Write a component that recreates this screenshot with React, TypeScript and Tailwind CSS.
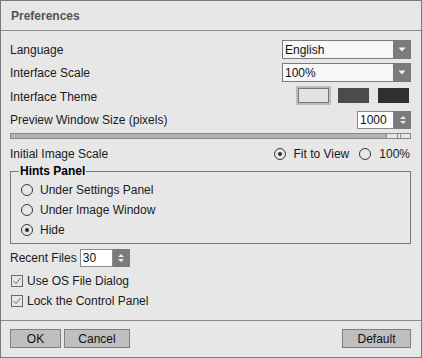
import React from "react";

function Dropdown({ value }: { value: string }) {
  return (
    <div className="flex w-[129px] h-[19px] border border-[#7a7a7a]">
      <div className="flex-1 bg-[#f7f7f7] pl-[2px] flex items-center text-[#111]">{value}</div>
      <div className="w-[17px] bg-[#7b7b7b] flex items-center justify-center">
        <svg width="8" height="5" viewBox="0 0 8 5">
          <path d="M0.5 0.5 L7.5 0.5 L4 4.5 Z" fill="#f2f2f2" />
        </svg>
      </div>
    </div>
  );
}

function Spin({ value, fieldW }: { value: string; fieldW: string }) {
  return (
    <div className="flex h-[18px]">
      <div className={`${fieldW} h-full bg-white border border-[#8a8a8a] pl-[2px] flex items-center text-[#111]`}>{value}</div>
      <div className="w-[17px] h-full bg-[#7b7b7b] flex flex-col items-center justify-center gap-[2px]">
        <svg width="6" height="3" viewBox="0 0 6 3">
          <path d="M0 3 L6 3 L3 0 Z" fill="#eeeeee" />
        </svg>
        <svg width="6" height="3" viewBox="0 0 6 3">
          <path d="M0 0 L6 0 L3 3 Z" fill="#eeeeee" />
        </svg>
      </div>
    </div>
  );
}

function Radio({ checked, label, gap = "ml-[7px]" }: { checked?: boolean; label: string; gap?: string }) {
  return (
    <div className="flex items-center">
      <div className="w-[12px] h-[12px] rounded-full border border-[#3a3a3a] flex items-center justify-center">
        {checked && <div className="w-[4px] h-[4px] rounded-full bg-[#2a2a2a]" />}
      </div>
      <span className={gap}>{label}</span>
    </div>
  );
}

function Check({ label }: { label: string }) {
  return (
    <div className="flex items-center h-[20px]">
      <div className="ml-[1px] w-[12px] h-[12px] border border-[#6a6a6a] flex items-center justify-center">
        <svg width="10" height="10" viewBox="0 0 10 10">
          <path d="M1.5 5 L4 7.5 L8.5 2" fill="none" stroke="#6a6a6a" strokeWidth="1" />
        </svg>
      </div>
      <span className="ml-[4px]">{label}</span>
    </div>
  );
}

function Button({ label, w }: { label: string; w: string }) {
  return (
    <div className={`${w} h-[19px] bg-[#bfbfbf] border border-[#7f7f7f] flex items-center justify-center text-[#111]`}>
      {label}
    </div>
  );
}

export default function App() {
  return (
    <div className="w-[422px] h-[358px] border border-[#7a7a7a] bg-[#e7e7e7] flex flex-col text-[12px] leading-[14px] text-[#1a1a1a] font-['Liberation_Sans',Arial,sans-serif]">
      <div className="h-[30px] border-b border-[#8a8a8a] pl-[10px] flex items-center font-bold text-[#555]">
        Preferences
      </div>
      <div className="flex-1 flex flex-col pl-[9px] pr-[10px] pt-[9px]">
        <div className="flex items-center justify-between h-[19px]">
          <span>Language</span>
          <Dropdown value="English" />
        </div>
        <div className="flex items-center justify-between h-[19px] mt-[4px]">
          <span>Interface Scale</span>
          <Dropdown value="100%" />
        </div>
        <div className="flex items-center justify-between h-[19px] mt-[4px]">
          <span className="mt-[2px]">Interface Theme</span>
          <div className="flex items-center gap-[9px] mr-[2px]">
            <div className="w-[31px] h-[15px] bg-[#e1e1e1] border border-[#777] outline-2 outline-[#bcbcbc]" />
            <div className="w-[31px] h-[15px] bg-[#4b4b4b]" />
            <div className="w-[31px] h-[15px] bg-[#2f2f2f]" />
          </div>
        </div>
        <div className="flex items-center justify-between h-[19px] mt-[5px]">
          <span>Preview Window Size (pixels)</span>
          <Spin value="1000" fieldW="w-[37px]" />
        </div>
        <div className="mt-[4px] h-[6px] border border-[#8a8a8a] bg-[#b3b3b3] flex justify-end">
          <div className="w-[24px] h-full bg-[#e6e6e6] border-l border-[#8a8a8a] flex justify-center gap-[2px]">
            <div className="w-[1px] h-full bg-[#8a8a8a]" />
            <div className="w-[1px] h-full bg-[#8a8a8a]" />
          </div>
        </div>
        <div className="flex items-center justify-between h-[19px] mt-[5px]">
          <span>Initial Image Scale</span>
          <div className="flex items-center gap-[10px] mr-[1px]">
            <Radio checked label="Fit to View" gap="ml-[7px]" />
            <Radio label="100%" gap="ml-[8px]" />
          </div>
        </div>
        <div className="relative mt-[8px] h-[73px] border border-[#7a7a7a] pl-[10px] pt-[8px]">
          <span className="absolute left-[8px] top-[-8px] px-[1px] bg-[#e7e7e7] font-bold text-[#000]">Hints Panel</span>
          <div className="flex items-center h-[20px]">
            <Radio label="Under Settings Panel" />
          </div>
          <div className="flex items-center h-[20px]">
            <Radio label="Under Image Window" />
          </div>
          <div className="flex items-center h-[20px]">
            <Radio checked label="Hide" />
          </div>
        </div>
        <div className="flex items-center h-[19px] mt-[4px]">
          <span>Recent Files</span>
          <div className="ml-[3px]">
            <Spin value="30" fieldW="w-[33px]" />
          </div>
        </div>
        <div className="mt-[4px]">
          <Check label="Use OS File Dialog" />
          <Check label="Lock the Control Panel" />
        </div>
      </div>
      <div className="h-[37px] border-t border-[#8a8a8a] pl-[9px] pr-[10px] pt-[8px] flex">
        <Button label="OK" w="w-[51px]" />
        <div className="ml-[3px]">
          <Button label="Cancel" w="w-[66px]" />
        </div>
        <div className="ml-auto">
          <Button label="Default" w="w-[69px]" />
        </div>
      </div>
    </div>
  );
}
